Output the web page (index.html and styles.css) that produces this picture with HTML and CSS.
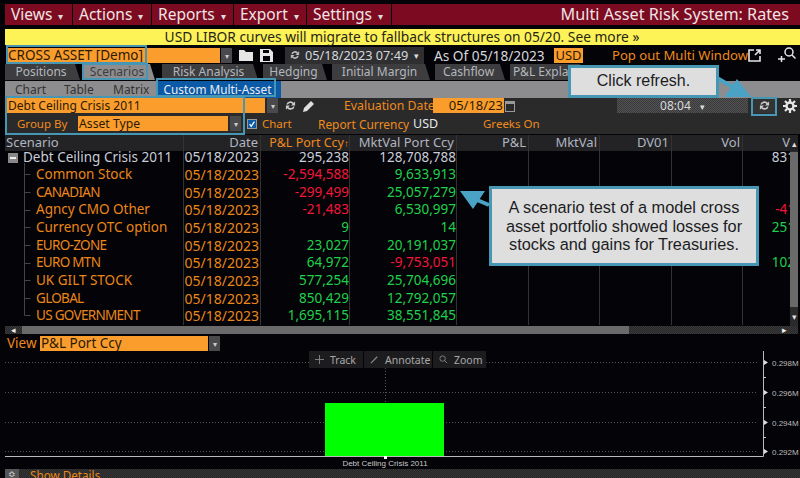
FILE: index.html
```html
<!DOCTYPE html>
<html lang="en">
<head>
<meta charset="utf-8">
<title>Multi Asset Risk System: Rates</title>
<link rel="stylesheet" href="styles.css">
</head>
<body>
<div class="app">
  <nav class="menubar">
    <div class="menu w-views">Views <i class="caret">▾</i></div>
    <div class="menu w-actions">Actions <i class="caret">▾</i></div>
    <div class="menu w-reports">Reports <i class="caret">▾</i></div>
    <div class="menu w-export">Export <i class="caret">▾</i></div>
    <div class="menu w-settings">Settings <i class="caret">▾</i></div>
    <div class="apptitle">Multi Asset Risk System: Rates</div>
  </nav>
  <div class="notice">USD LIBOR curves will migrate to fallback structures on 05/20. See more »</div>
  <div class="portrow">
    <div class="field f-port">CROSS ASSET [Demo]</div>
    <div class="drop"><i>▾</i></div>
    <svg class="ico i-folder" viewBox="0 0 14 12"><path d="M0 1h5l2 2h7v9H0z" fill="#e6e6e6"/></svg>
    <svg class="ico i-save" viewBox="0 0 13 13"><path d="M0 0h10l3 3v10H0zM3 1v3h6V1zM3 7v5h7V7z" fill="#e6e6e6" fill-rule="evenodd"/></svg>
    <div class="datebox"><svg class="ico i-ref" viewBox="0 0 12 12"><path d="M1.500 5A4.600 4.600 0 0 1 9.500 3L11 1.500V6H6.500L8.300 4.300A3 3 0 0 0 3.200 5zM10.500 7A4.600 4.600 0 0 1 2.500 9L1 10.500V6h4.500L3.700 7.700A3 3 0 0 0 8.800 7z" fill="#bbb"/></svg><span>05/18/2023 07:49</span><i class="caret small">▾</i></div>
    <div class="asof">As Of 05/18/2023</div>
    <div class="usd">USD</div>
    <div class="popout">Pop out Multi Window</div>
    <svg class="ico i-pop" viewBox="0 0 13 13"><path d="M6 1H1v11h11V7M7 6l5-5M8 1h4v4" fill="none" stroke="#e6e6e6" stroke-width="1.600"/></svg>
    <svg class="ico i-user" viewBox="0 0 18 16"><circle cx="11" cy="5" r="4" fill="none" stroke="#e6e6e6" stroke-width="1.500"/><path d="M14 8l3.500 3.500M0 12h7M3.500 9v6" stroke="#e6e6e6" stroke-width="1.500"/></svg>
  </div>
  <div class="tabs">
    <div class="tab t-pos">Positions</div>
    <div class="tab active t-sce">Scenarios</div>
    <div class="tab t-risk">Risk Analysis</div>
    <div class="tab t-hedge">Hedging</div>
    <div class="tab t-init">Initial Margin</div>
    <div class="tab t-cash">Cashflow</div>
    <div class="tab t-pl">P&amp;L Explain</div>
  </div>
  <div class="subtabs">
    <div class="sub s-chart">Chart</div>
    <div class="sub s-table">Table</div>
    <div class="sub s-matrix">Matrix</div>
    <div class="sub selected">Custom Multi-Asset</div>
  </div>
  <div class="controls">
    <div class="ctlrow">
      <div class="field f-scen">Debt Ceiling Crisis 2011</div>
      <div class="drop d-wide"><i>▾</i></div>
      <svg class="ico i-ref2" viewBox="0 0 12 12"><path d="M1.500 5A4.600 4.600 0 0 1 9.500 3L11 1.500V6H6.500L8.300 4.300A3 3 0 0 0 3.200 5zM10.500 7A4.600 4.600 0 0 1 2.500 9L1 10.500V6h4.500L3.700 7.700A3 3 0 0 0 8.800 7z" fill="#ccc"/></svg>
      <svg class="ico i-pencil" viewBox="0 0 12 12"><path d="M0 12l1-4 7-7 3 3-7 7z" fill="#e0e0e0"/></svg>
      <div class="lbl l-eval">Evaluation Date</div>
      <div class="field f-date">05/18/23</div>
      <svg class="ico i-cal" viewBox="0 0 10 12"><path d="M0 1h10v11H0zM1 4v7h8V4z" fill="#999" fill-rule="evenodd"/></svg>
      <div class="timebar">08:04 <i class="caret small">▾</i></div>
      <div class="refbtn"><svg class="ico i-ref3" viewBox="0 0 12 12"><path d="M1.500 5A4.600 4.600 0 0 1 9.500 3L11 1.500V6H6.500L8.300 4.300A3 3 0 0 0 3.200 5zM10.500 7A4.600 4.600 0 0 1 2.500 9L1 10.500V6h4.500L3.700 7.700A3 3 0 0 0 8.800 7z" fill="#ccc"/></svg></div>
      <svg class="ico i-gear" viewBox="0 0 14 14"><circle cx="7" cy="7" r="3.500" fill="none" stroke="#e6e6e6" stroke-width="2.400"/><path d="M7 0v3M7 11v3M0 7h3M11 7h3M2 2l2 2M10 10l2 2M12 2l-2 2M4 10l-2 2" stroke="#e6e6e6" stroke-width="2.200"/></svg>
    </div>
    <div class="ctlrow second">
      <div class="lbl l-group">Group By</div>
      <div class="field f-group">Asset Type</div>
      <div class="drop d-wide"><i>▾</i></div>
      <div class="check"><svg viewBox="0 0 10 10"><path d="M2 5l2 3 4-6" fill="none" stroke="#fff" stroke-width="1.600"/></svg></div>
      <div class="lbl l-chart">Chart</div>
      <div class="lbl l-rc">Report Currency</div>
      <div class="white l-usd">USD</div>
      <div class="lbl l-greeks">Greeks On</div>
    </div>
  </div>
  <div class="table">
    <div class="row head">
      <div class="c left">Scenario</div><div class="c">Date</div><div class="c or">P&amp;L Port Ccy<i class="up">↑</i></div><div class="c">MktVal Port Ccy</div><div class="c">P&amp;L</div><div class="c">MktVal</div><div class="c">DV01</div><div class="c">Vol</div><div class="c v hv">V<i class="upbtn">▴</i></div>
    </div>
    <div class="tbody">
      <div class="row first"><div class="c left parent"><span class="minus"></span>Debt Ceiling Crisis 2011</div><div class="c w dt">05/18/2023</div><div class="c w">295,238</div><div class="c w">128,708,788</div><div class="c"></div><div class="c"></div><div class="c"></div><div class="c"></div><div class="c v w">831</div></div>
      <div class="row"><div class="c left kid">Common Stock</div><div class="c o dt">05/18/2023</div><div class="c r">-2,594,588</div><div class="c g">9,633,913</div><div class="c"></div><div class="c"></div><div class="c"></div><div class="c"></div><div class="c v"></div></div>
      <div class="row"><div class="c left kid caps">CANADIAN</div><div class="c o dt">05/18/2023</div><div class="c r">-299,499</div><div class="c g">25,057,279</div><div class="c"></div><div class="c"></div><div class="c"></div><div class="c"></div><div class="c v"></div></div>
      <div class="row"><div class="c left kid">Agncy CMO Other</div><div class="c o dt">05/18/2023</div><div class="c r">-21,483</div><div class="c g">6,530,997</div><div class="c"></div><div class="c"></div><div class="c"></div><div class="c"></div><div class="c v r">-41</div></div>
      <div class="row"><div class="c left kid">Currency OTC option</div><div class="c o dt">05/18/2023</div><div class="c g">9</div><div class="c g">14</div><div class="c"></div><div class="c"></div><div class="c"></div><div class="c"></div><div class="c v g">251</div></div>
      <div class="row"><div class="c left kid caps">EURO-ZONE</div><div class="c o dt">05/18/2023</div><div class="c g">23,027</div><div class="c g">20,191,037</div><div class="c"></div><div class="c"></div><div class="c"></div><div class="c"></div><div class="c v"></div></div>
      <div class="row"><div class="c left kid caps">EURO MTN</div><div class="c o dt">05/18/2023</div><div class="c g">64,972</div><div class="c r">-9,753,051</div><div class="c"></div><div class="c"></div><div class="c"></div><div class="c"></div><div class="c v g">102</div></div>
      <div class="row"><div class="c left kid">UK GILT STOCK</div><div class="c o dt">05/18/2023</div><div class="c g">577,254</div><div class="c g">25,704,696</div><div class="c"></div><div class="c"></div><div class="c"></div><div class="c"></div><div class="c v"></div></div>
      <div class="row"><div class="c left kid caps">GLOBAL</div><div class="c o dt">05/18/2023</div><div class="c g">850,429</div><div class="c g">12,792,057</div><div class="c"></div><div class="c"></div><div class="c"></div><div class="c"></div><div class="c v"></div></div>
      <div class="row"><div class="c left kid caps">US GOVERNMENT</div><div class="c o dt">05/18/2023</div><div class="c g">1,695,115</div><div class="c g">38,551,845</div><div class="c"></div><div class="c"></div><div class="c"></div><div class="c"></div><div class="c v"></div></div>
      <svg class="tree" viewBox="0 0 12 160"><path d="M4.500 0V152.500M4.500 11.500h6M4.500 29.500h6M4.500 47.500h6M4.500 64.500h6M4.500 82.500h6M4.500 100.500h6M4.500 117.500h6M4.500 135.500h6M4.500 152.500h6" stroke="#444" fill="none"/></svg>
    </div>
    <div class="vscroll"><i class="thumbv"></i><i class="down">▾</i></div>
    <div class="hscroll"><i class="arrow al">◂</i><i class="thumbh"></i><i class="arrow ar">▸</i></div>
  </div>
  <div class="viewrow">
    <div class="lbl l-view">View</div>
    <div class="field f-view">P&amp;L Port Ccy</div>
    <div class="drop"><i>▾</i></div>
  </div>
  <div class="chart">
    <svg class="plot" viewBox="0 0 800 117" width="800" height="117">
      <g stroke="#555" stroke-dasharray="1 2">
        <path d="M5 11.500H309M486 11.500H757M5 41.500H757M5 71.500H757M5 100.500H757"/>
        <path d="M385.500 17V52"/>
      </g>
      <rect x="325" y="52" width="119" height="53" fill="#00ff00"/>
      <path d="M5 105.500H763.500V0" fill="none" stroke="#bbb"/>
      <path d="M763 26.500h3M763 56.500h3M763 86.500h3" stroke="#ccc"/>
      <path d="M764 9l4 2.500-4 2.500zM764 39l4 2.500-4 2.500zM764 69l4 2.500-4 2.500zM764 98l4 2.500-4 2.500z" fill="#ddd"/>
      <path d="M384 105h3v3h-3z" fill="#fff"/>
      <g class="axis">
        <text x="772" y="14.500">0.298M</text>
        <text x="772" y="44.500">0.296M</text>
        <text x="772" y="74.500">0.294M</text>
        <text x="772" y="103.500">0.292M</text>
      </g>
      <text class="cat" x="385" y="114.500" text-anchor="middle">Debt Ceiling Crisis 2011</text>
    </svg>
    <div class="tools">
      <div class="tool tw-track"><svg viewBox="0 0 10 10"><path d="M5 0v10M0 5h10" stroke="#888"/></svg>Track</div>
      <div class="tool tw-ann"><svg viewBox="0 0 10 10"><path d="M1 9L8 2" stroke="#888" stroke-width="1.400"/></svg>Annotate</div>
      <div class="tool tw-zoom"><svg viewBox="0 0 10 10"><circle cx="4" cy="4" r="3" fill="none" stroke="#888"/><path d="M6 6l3 3" stroke="#888"/></svg>Zoom</div>
    </div>
  </div>
  <div class="details"><span class="detbtn">≎</span><span class="dettext">Show Details</span></div>
</div>

<div class="hl hl-port"></div>
<div class="hl hl-sce"></div>
<div class="hl hl-custom"></div>
<div class="hl hl-scen"></div>
<div class="hl hl-ref"></div>
<svg class="arrows" width="800" height="478" viewBox="0 0 800 478">
  <path d="M717 78L738 90" stroke="#4aa3c4" stroke-width="4"/>
  <path d="M751 97L724 97L737 79z" fill="#4aa3c4"/>
  <path d="M489 205L470 197" stroke="#4aa3c4" stroke-width="4"/>
  <path d="M460 191L485 191L473 209z" fill="#4aa3c4"/>
</svg>
<div class="callout co-refresh">Click refresh.</div>
<div class="callout co-test">A scenario test of a model cross asset portfolio showed losses for stocks and gains for Treasuries.</div>
</body>
</html>
```
FILE: styles.css
```css
* { box-sizing: border-box; }
html, body { margin: 0; padding: 0; background: #040307; }
body { width: 800px; height: 478px; overflow: hidden; position: relative; font-family: "Noto Sans", "Liberation Sans", sans-serif; font-size: 12.500px; color: #c8cdd8; }
i { font-style: normal; }
.app { display: flex; flex-direction: column; padding-top: 4px; height: 478px; }
.ico { display: block; flex: none; }

.menubar { display: flex; gap: 1px; height: 21px; padding-left: 5px; }
.menu { background: #7c0a20; color: #f0e4e6; font-size: 15.500px; line-height: 20px; padding-left: 6px; white-space: nowrap; }
.caret { font-size: 10px; margin-left: 2px; color: #ddd; }
.caret.small { font-size: 9px; margin-left: 6px; }
.w-views { width: 67px; } .w-actions { width: 78px; } .w-reports { width: 81px; } .w-export { width: 72px; } .w-settings { width: 84px; }
.apptitle { flex: 1; background: #7c0a20; color: #efe3e5; font-size: 16.200px; line-height: 20px; text-align: right; padding-right: 11px; }

.notice { margin: 4px 0 0 5px; height: 16px; background: #fdf256; color: #26251a; font-size: 13.750px; line-height: 16px; text-align: center; padding-right: 1px; }

.portrow { display: flex; align-items: center; height: 18px; padding-left: 8px; margin-top: 1px; }
.field { background: #fb9d2c; color: #2a1a04; white-space: nowrap; overflow: hidden; line-height: 15px; height: 15px; font-size: 13.500px; flex: none; }
.drop { width: 11px; height: 15px; background: #4a4a4c; margin-left: 1px; color: #ccc; font-size: 8px; line-height: 15px; text-align: center; flex: none; }
.drop.d-wide { margin-left: 2px; }
.f-port { width: 212px; }
.i-folder { width: 14px; height: 12px; margin-left: 7px; }
.i-save { width: 13px; height: 13px; margin-left: 7px; }
.datebox { display: flex; align-items: center; width: 139px; height: 17px; margin-left: 12px; background: #2f2f31; color: #d6d8de; font-size: 12.700px; padding-left: 5px; white-space: nowrap; }
.i-ref { width: 10px; height: 10px; margin-right: 5px; }
.asof { margin-left: 10px; width: 120px; color: #d6d8de; font-size: 13.700px; white-space: nowrap; }
.usd { width: 29px; height: 15px; background: #fb9d2c; color: #2a1a04; font-size: 13px; line-height: 15px; text-align: center; }
.popout { margin-left: 29px; width: 135px; color: #f08a1c; font-size: 13.100px; white-space: nowrap; }
.i-pop { width: 13px; height: 13px; margin-left: 1px; }
.i-user { width: 18px; height: 16px; margin-left: 17px; }

.tabs { display: flex; height: 16px; padding-left: 5px; }
.tab { background: #3d3d3f; color: #b4b7bd; font-size: 12px; line-height: 16px; text-align: center; white-space: nowrap; margin-right: 5px; padding-right: 3px; clip-path: polygon(0 0, calc(100% - 5px) 0, 100% 100%, 0 100%); }
.tab.active { background: #8d8d8f; color: #3c3c3e; }
.t-pos { width: 75px; margin-right: 2px; } .t-sce { width: 73px; margin-right: 7px; } .t-risk { width: 96px; } .t-hedge { width: 64px; } .t-init { width: 98px; } .t-cash { width: 70px; } .t-pl { width: 75px; }

.subtabs { display: flex; height: 17px; margin: 1px 0 0 5px; background: #8d8d8f; color: #333; font-size: 12px; line-height: 17px; }
.s-chart { margin-left: 10px; width: 49px; } .s-table { width: 49px; } .s-matrix { width: 45px; }
.selected { background: #0c59a5; color: #e8eef6; width: 123px; text-align: center; font-size: 11.800px; padding-right: 4px; }

.controls { height: 36px; margin-left: 5px; background: #2a2a2a; display: flex; flex-direction: column; }
.ctlrow { display: flex; align-items: center; height: 15px; white-space: nowrap; }
.ctlrow.second { margin-top: 3px; }
.lbl { color: #f08a1c; font-size: 12px; white-space: nowrap; flex: none; }
.white { color: #e4e6ea; font-size: 12.500px; flex: none; }
.f-scen { width: 258px; margin-left: 2px; padding-left: 1px; font-size: 12px; }
.i-ref2 { width: 11px; height: 11px; margin-left: 7px; }
.i-pencil { width: 12px; height: 12px; margin-left: 7px; }
.l-eval { margin-left: 29px; width: 89px; font-size: 12.300px; }
.f-date { width: 71px; text-align: right; padding-right: 1px; font-size: 13px; }
.i-cal { width: 10px; height: 12px; margin-left: 1px; }
.timebar { width: 131px; height: 15px; margin-left: 102px; background: repeating-conic-gradient(#3a3a3a 0 25%, #525254 0 50%) 0 0 / 2px 2px; color: #d6d8de; font-size: 12px; line-height: 15px; text-align: center; }
.refbtn { width: 22px; height: 15px; margin-left: 5px; background: #333; display: flex; align-items: center; justify-content: center; }
.i-ref3 { width: 11px; height: 11px; }
.i-gear { width: 14px; height: 14px; margin-left: 8px; }
.l-group { margin-left: 12px; width: 61px; font-size: 11.500px; }
.f-group { width: 150px; padding-left: 1px; font-size: 12.200px; }
.check { width: 10px; height: 10px; margin-left: 6px; background: #0c59a5; border: 1px solid #999; flex: none; }
.check svg { display: block; width: 8px; height: 8px; }
.l-chart { margin-left: 5px; width: 56px; font-size: 11.500px; }
.l-rc { width: 95px; font-size: 11.900px; }
.l-usd { width: 70px; }
.l-greeks { font-size: 11.500px; }

.table { position: relative; margin: 1px 2px 0 5px; height: 201px; overflow: hidden; }
.row { display: grid; grid-template-columns: 179px 77px 89px 107px 72px 71px 72px 71px 55px; height: 17.700px; line-height: 17.700px; white-space: nowrap; font-size: 13.500px; }
.row.head { height: 16px; line-height: 15px; background: #232325; font-size: 13px; color: #b0b5c0; }
.row.first { height: 15px; line-height: 12px; }
.c { text-align: right; border-right: 1px solid #333; overflow: hidden; }
.row.head .c { padding-right: 2px; }
.c.left { text-align: left; padding-left: 1px; }
.row.head .c.or { color: #f08a1c; font-size: 12.500px; padding-right: 0; }
.up { font-size: 10px; }
.c.v { border-right: 0; padding-right: 3px; }
.row.head .c.hv { padding-right: 0; color: #b0b5c0; }
.upbtn { display: inline-block; width: 8px; font-size: 9px; color: #ddd; text-align: center; }
.c.dt { font-size: 14px; padding-right: 1px; }
.c.w { color: #c8cdd8; } .o { color: #ea8718; } .r { color: #f2163a; } .g { color: #1fd14c; }
.parent { color: #c8cdd8; }
.minus { display: inline-block; width: 10px; height: 10px; margin: 0 5px 0 2px; background: #888 linear-gradient(#eee, #eee) center / 6px 2px no-repeat; vertical-align: -1px; }
.c.left.kid { color: #ea8718; padding-left: 31px; }
.c.left.caps { letter-spacing: -0.700px; }
.tbody { position: relative; height: 175px; overflow: hidden; }
.tree { position: absolute; left: 15px; top: 12px; width: 12px; height: 160px; }
.vscroll { position: absolute; right: 0; top: 16px; width: 8px; height: 175px; background: #2a2a2a; }
.thumbv { position: absolute; top: 1px; left: 0; width: 8px; height: 155px; background: #6a6a6a; }
.down { position: absolute; left: 0; top: 160px; width: 8px; color: #ddd; font-size: 9px; line-height: 12px; text-align: center; }
.hscroll { position: absolute; left: 0; right: 0; top: 191px; height: 8px; background: repeating-conic-gradient(#262626 0 25%, #3a3a3a 0 50%) 0 0 / 2px 2px; }
.thumbh { position: absolute; left: 17px; top: 0; width: 607px; height: 8px; background: #6a6a6a; }
.arrow { position: absolute; top: 0; font-size: 9px; line-height: 8px; color: #eee; }
.al { left: 6px; } .ar { left: 777px; }

.viewrow { display: flex; align-items: center; height: 16px; padding-left: 7px; }
.l-view { width: 33px; font-size: 13.500px; }
.f-view { width: 168px; padding-left: 1px; }

.chart { position: relative; height: 117px; }
.plot { display: block; }
.axis text { fill: #bbb; font-size: 8px; font-family: "Liberation Sans", sans-serif; }
.cat { fill: #c8c8c8; font-size: 8px; font-family: "Liberation Sans", sans-serif; }
.tools { position: absolute; left: 309px; top: 0; display: flex; gap: 1px; height: 17px; }
.tool { display: flex; align-items: center; gap: 6px; background: #1c1c1e; color: #a8a8a8; font-size: 10.500px; padding-left: 6px; white-space: nowrap; }
.tool svg { width: 9px; height: 9px; flex: none; }
.tw-track { width: 54px; } .tw-ann { width: 68px; } .tw-zoom { width: 53px; }

.details { display: flex; align-items: flex-start; height: 9px; margin: 1px 0 0 5px; background: repeating-conic-gradient(#262626 0 25%, #363636 0 50%) 0 0 / 2px 2px; }
.detbtn { width: 14px; height: 9px; background: #555; color: #ddd; font-size: 9px; line-height: 9px; text-align: center; }
.dettext { margin-left: 11px; color: #ea8718; font-size: 11.700px; line-height: 12px; }

.hl { position: absolute; border: 2px solid #4796b4; }
.hl-port { left: 6px; top: 45px; width: 141px; height: 19px; }
.hl-sce { left: 82px; top: 63px; width: 66px; height: 17px; }
.hl-custom { left: 156px; top: 78px; width: 120px; height: 19px; }
.hl-scen { left: 5px; top: 96px; width: 240px; height: 39px; }
.hl-ref { left: 751px; top: 97px; width: 26px; height: 19px; }
.arrows { position: absolute; left: 0; top: 0; pointer-events: none; }

.callout { position: absolute; background: #dedede; border: 3px solid #4796b4; color: #1c1c1f; font-family: "Liberation Sans", sans-serif; line-height: 18.700px; text-align: center; display: flex; align-items: center; justify-content: center; }
.co-refresh { left: 568px; top: 65px; width: 151px; height: 33px; font-size: 16px; }
.co-test { left: 489px; top: 186px; width: 270px; height: 80px; padding: 0 10px; font-size: 16.300px; }
```
